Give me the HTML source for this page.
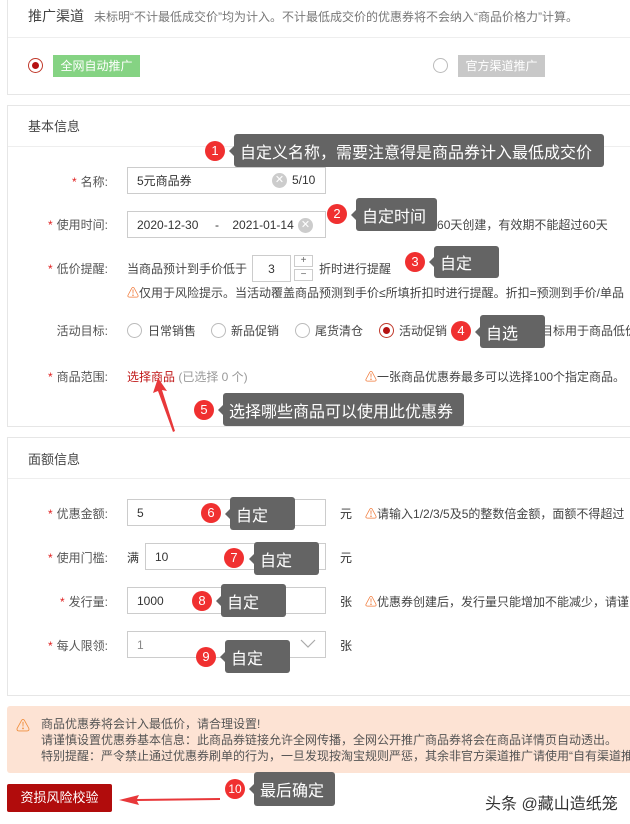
<!DOCTYPE html>
<html><head><meta charset="utf-8"><style>
*{margin:0;padding:0;box-sizing:border-box}
body{width:630px;height:824px;background:#fff;position:relative;overflow:hidden;font-family:"Liberation Sans","Noto Sans CJK SC",sans-serif;font-size:12px;color:#333}
.a{position:absolute;white-space:nowrap}
.box{position:absolute;left:7px;right:-2px;border:1px solid #e6e6e6}
.hr{position:absolute;left:8px;right:0;height:1px;background:#eee}
.lab{position:absolute;right:522px;font-size:12px;color:#555;white-space:nowrap}
.lab b{color:#e02020;font-weight:normal;margin-right:4px}
.inp{position:absolute;border:1px solid #ccc;background:#fff;font-size:12px;color:#333;padding-left:9px;display:flex;align-items:center}
.tip{position:absolute;background:#646464;color:#fff;border-radius:3px;font-size:16px;display:flex;align-items:center;padding-left:6px;white-space:nowrap}
.tip:before{content:"";position:absolute;left:-5px;top:50%;margin-top:-5px;border:5px solid transparent;border-left:0;border-right-color:#646464}
.num{position:absolute;width:20px;height:20px;border-radius:50%;background:#f03030;color:#fff;font-size:13px;text-align:center;line-height:20px}
.rad{position:absolute;width:15px;height:15px;border:1px solid #bbb;border-radius:50%;background:#fff}
.rad.on{border-color:#c0392b}
.rad.on:after{content:"";position:absolute;left:3px;top:3px;width:7px;height:7px;border-radius:50%;background:#b51212}
.warn{color:#f07a3a}
.gt{color:#333}
</style></head><body>
<!-- section 1 -->
<div class="box" style="top:-2px;height:97px"></div>
<div class="a" style="left:28px;top:6px;font-size:14px;color:#444">推广渠道</div>
<div class="a" style="left:94px;top:8px;font-size:12px;color:#777">未标明“不计最低成交价”均为计入。不计最低成交价的优惠券将不会纳入“商品价格力”计算。</div>
<div class="hr" style="top:37px"></div>
<div class="rad on" style="left:28px;top:58px"></div>
<div class="a" style="left:53px;top:55px;width:87px;height:22px;background:#85d383;color:#fff;font-size:12px;line-height:22px;text-align:center">全网自动推广</div>
<div class="rad" style="left:433px;top:58px"></div>
<div class="a" style="left:458px;top:55px;width:87px;height:22px;background:#c8c8c8;color:#fff;font-size:12px;line-height:22px;text-align:center">官方渠道推广</div>

<!-- section 2 -->
<div class="box" style="top:105px;height:322px"></div>
<div class="a" style="left:28px;top:116px;font-size:13px;color:#444">基本信息</div>
<div class="hr" style="top:146px"></div>

<div class="lab" style="top:173px"><b>*</b>名称:</div>
<div class="inp" style="left:127px;top:167px;width:199px;height:27px">5元商品券</div>
<div class="a" style="left:272px;top:173px;width:15px;height:15px;border-radius:50%;background:#ccc;color:#fff;font-size:11px;line-height:15px;text-align:center">✕</div>
<div class="a" style="left:292px;top:173px;font-size:12px">5/10</div>

<div class="lab" style="top:216px"><b>*</b>使用时间:</div>
<div class="inp" style="left:127px;top:211px;width:199px;height:27px">2020-12-30 &nbsp;&nbsp;&nbsp;&nbsp;- &nbsp;&nbsp;&nbsp;2021-01-14</div>
<div class="a" style="left:298px;top:218px;width:15px;height:15px;border-radius:50%;background:#ccc;color:#fff;font-size:11px;line-height:15px;text-align:center">✕</div>
<div class="a" style="left:365px;top:216px;font-size:12px;color:#444"><span class="warn">⚠</span>最长可提前60天创建，有效期不能超过60天</div>

<div class="lab" style="top:260px"><b>*</b>低价提醒:</div>
<div class="a" style="left:127px;top:260px;color:#444">当商品预计到手价低于</div>
<div class="inp" style="left:252px;top:255px;width:39px;height:27px;justify-content:center;padding:0">3</div>
<div class="a" style="left:294px;top:255px;width:19px;height:12px;border:1px solid #ccc;font-size:10px;line-height:10px;text-align:center;color:#666">+</div>
<div class="a" style="left:294px;top:269px;width:19px;height:12px;border:1px solid #ccc;font-size:10px;line-height:10px;text-align:center;color:#666">−</div>
<div class="a" style="left:319px;top:260px;color:#444">折时进行提醒</div>
<div class="a" style="left:127px;top:284px;color:#444"><span class="warn">⚠</span>仅用于风险提示。当活动覆盖商品预测到手价≤所填折扣时进行提醒。折扣=预测到手价/单品</div>

<div class="a" style="right:522px;top:322px;color:#555">活动目标:</div>
<div class="rad" style="left:127px;top:323px"></div><div class="a" style="left:148px;top:322px;color:#444">日常销售</div>
<div class="rad" style="left:211px;top:323px"></div><div class="a" style="left:231px;top:322px;color:#444">新品促销</div>
<div class="rad" style="left:295px;top:323px"></div><div class="a" style="left:315px;top:322px;color:#444">尾货清仓</div>
<div class="rad on" style="left:379px;top:323px"></div><div class="a" style="left:399px;top:322px;color:#444">活动促销</div>
<div class="a" style="left:505px;top:322px;color:#444"><span class="warn">⚠</span>营销目标用于商品低价</div>

<div class="lab" style="top:368px"><b>*</b>商品范围:</div>
<div class="a" style="left:127px;top:368px;color:#c01818">选择商品 <span style="color:#999">(已选择 0 个)</span></div>
<div class="a" style="left:365px;top:368px;color:#444"><span class="warn">⚠</span>一张商品优惠券最多可以选择100个指定商品。</div>

<!-- section 3 -->
<div class="box" style="top:437px;height:259px"></div>
<div class="a" style="left:28px;top:449px;font-size:13px;color:#444">面额信息</div>
<div class="hr" style="top:478px"></div>

<div class="lab" style="top:505px"><b>*</b>优惠金额:</div>
<div class="inp" style="left:127px;top:499px;width:199px;height:27px">5</div>
<div class="a" style="left:340px;top:505px">元</div>
<div class="a" style="left:365px;top:505px;color:#444"><span class="warn">⚠</span>请输入1/2/3/5及5的整数倍金额，面额不得超过</div>

<div class="lab" style="top:549px"><b>*</b>使用门槛:</div>
<div class="a" style="left:127px;top:549px">满</div>
<div class="inp" style="left:145px;top:543px;width:181px;height:27px">10</div>
<div class="a" style="left:340px;top:549px">元</div>

<div class="lab" style="top:593px"><b>*</b>发行量:</div>
<div class="inp" style="left:127px;top:587px;width:199px;height:27px">1000</div>
<div class="a" style="left:340px;top:593px">张</div>
<div class="a" style="left:365px;top:593px;color:#444"><span class="warn">⚠</span>优惠券创建后，发行量只能增加不能减少，请谨</div>

<div class="lab" style="top:637px"><b>*</b>每人限领:</div>
<div class="inp" style="left:127px;top:631px;width:199px;height:27px;color:#888">1</div>
<svg class="a" style="left:300px;top:638px" width="16" height="12"><path d="M1 2 L8 9 L15 2" stroke="#aaa" fill="none" stroke-width="1.2"/></svg>
<div class="a" style="left:340px;top:637px">张</div>

<!-- notice -->
<div class="a" style="left:7px;top:706px;width:630px;height:67px;background:#fde3d4;border-radius:3px"></div>
<div class="a" style="left:16px;top:716px;font-size:14px;color:#f09040">⚠</div>
<div class="a" style="left:41px;top:716px;color:#555;line-height:16px">商品优惠券将会计入最低价，请合理设置!<br>请谨慎设置优惠券基本信息：此商品券链接允许全网传播，全网公开推广商品券将会在商品详情页自动透出。<br>特别提醒：严令禁止通过优惠券刷单的行为，一旦发现按淘宝规则严惩，其余非官方渠道推广请使用“自有渠道推</div>

<div class="a" style="left:7px;top:784px;width:105px;height:28px;background:#b10c0c;border-radius:2px;color:#fff;font-size:13px;line-height:28px;text-align:center">资损风险校验</div>
<svg class="a" style="left:115px;top:790px" width="110" height="20"><path d="M105 8 L22 9 L24 5 L4 10 L24 15 L22 11 L105 10 Z" fill="#e8383a"/></svg>
<div class="a" style="left:485px;top:790px;font-size:16px;color:#333">头条 @藏山造纸笼</div>

<!-- arrow 5 -->
<svg class="a" style="left:150px;top:375px" width="30" height="60"><path d="M8 3 L3 18 L8 16 L23 57 L25 56 L12 15 L17 16 Z" fill="#e8383a"/></svg>

<!-- tooltips -->
<div class="num" style="left:205px;top:141px">1</div><div class="tip" style="left:234px;top:134px;width:370px;height:33px">自定义名称，需要注意得是商品券计入最低成交价</div>
<div class="num" style="left:327px;top:204px">2</div><div class="tip" style="left:356px;top:198px;width:81px;height:33px">自定时间</div>
<div class="num" style="left:405px;top:252px">3</div><div class="tip" style="left:434px;top:246px;width:65px;height:32px">自定</div>
<div class="num" style="left:451px;top:321px">4</div><div class="tip" style="left:480px;top:315px;width:65px;height:33px">自选</div>
<div class="num" style="left:194px;top:400px">5</div><div class="tip" style="left:223px;top:393px;width:241px;height:33px">选择哪些商品可以使用此优惠券</div>
<div class="num" style="left:201px;top:503px">6</div><div class="tip" style="left:230px;top:497px;width:65px;height:33px">自定</div>
<div class="num" style="left:224px;top:548px">7</div><div class="tip" style="left:254px;top:542px;width:65px;height:33px">自定</div>
<div class="num" style="left:192px;top:591px">8</div><div class="tip" style="left:221px;top:584px;width:65px;height:33px">自定</div>
<div class="num" style="left:196px;top:647px">9</div><div class="tip" style="left:225px;top:640px;width:65px;height:33px">自定</div>
<div class="num" style="left:225px;top:779px;font-size:12px">10</div><div class="tip" style="left:254px;top:772px;width:81px;height:34px">最后确定</div>
</body></html>
